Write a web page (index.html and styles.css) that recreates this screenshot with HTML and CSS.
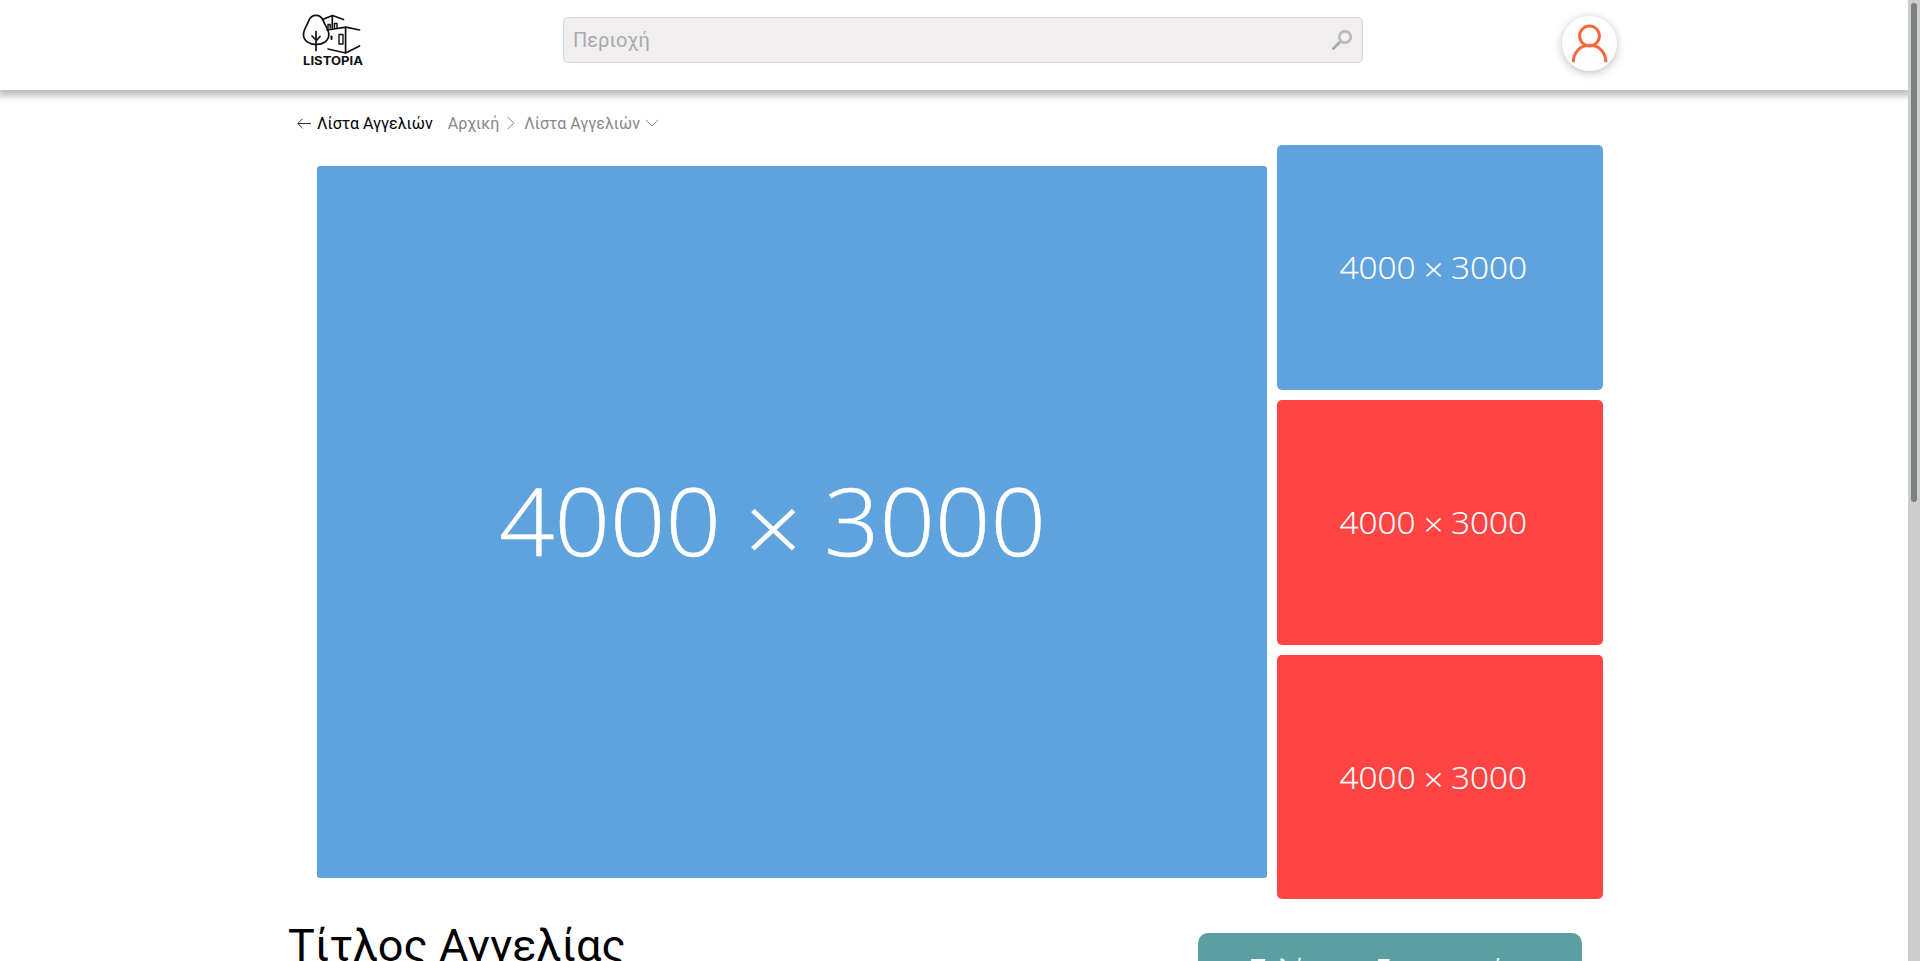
FILE: index.html
```html
<!DOCTYPE html>
<html lang="el">
<head>
<meta charset="utf-8">
<title>Listopia</title>
<link rel="stylesheet" href="styles.css">
</head>
<body>
<div class="page">
  <header class="header">
    <svg class="logo" viewBox="0 0 70 62" fill="none" stroke="#111" stroke-width="1.7" stroke-linecap="round" stroke-linejoin="round">
      <path d="M18 7.4C14.500 7.400 12 9.500 10.800 12.500C9.500 17 5.500 21 5.500 26.500C5.500 33 11.500 36.500 18 36.500C25 36.500 30.800 33 30.800 26.500C30.800 21 26.500 17 25.200 12.500C24 9.500 21.500 7.400 18 7.400Z"/>
      <path d="M18 23.500V42.500M18 32L14 28M18 33L22 28.500"/>
      <path d="M24.500 11.500L34.500 7.500L45.500 11.500M34.300 7.500V20M29 22L48 19.200L61.500 22M47.600 19.200V45M30 41L47.600 45L61.500 38"/>
      <path d="M30 20.500V16.500H32.200V20M36.500 19.500V15.500H39V19.500" stroke-width="1.400"/>
      <path d="M41 26.500H45V36H41Z" stroke-width="1.400"/>
      <path d="M33.500 28.500V31" stroke-width="2"/>
      <text class="logo-text" x="5" y="57" textLength="60" lengthAdjust="spacingAndGlyphs">LISTOPIA</text>
    </svg>
    <label class="search">
      <input class="search-input" type="text" placeholder="Περιοχή">
      <svg class="search-icon" viewBox="0 0 20 20" fill="none" stroke-linecap="round"><path d="M8.500 11.500L1.400 18.600" stroke="#a9a9a9" stroke-width="2.800"/><circle cx="13" cy="7" r="5.700" stroke="#bbb" stroke-width="2.800"/></svg>
    </label>
    <div class="account">
      <svg viewBox="0 0 55 55" width="55" height="55" fill="none" stroke="#f8683f" stroke-width="3"><circle cx="27.500" cy="20" r="9.900"/><path d="M11.300 46.300C11.300 36 18.500 29.300 27.600 29.300S43.900 36 43.900 46.300"/></svg>
    </div>
  </header>
  <nav class="crumbs">
    <svg class="back" viewBox="0 0 14 11" fill="none" stroke="#333"><path d="M5.500 .8L.8 5.500L5.500 10.200M.8 5.500H14"/></svg>
    <span class="current">Λίστα Αγγελιών</span>
    <span class="crumb">Αρχική</span>
    <svg class="next" viewBox="0 0 8 14" fill="none" stroke="#888"><path d="M.8 1L6.800 7L.8 13"/></svg>
    <span class="crumb-last">Λίστα Αγγελιών</span>
    <svg class="down" viewBox="0 0 14 8" fill="none" stroke="#888"><path d="M.8 .8L7 7L13.200 .8"/></svg>
  </nav>
  <section class="gallery">
    <svg class="main-photo blue" viewBox="0 0 950 712"><g class="size"><text x="182" y="390" textLength="222" lengthAdjust="spacingAndGlyphs">4000</text><text x="427.800" y="396.500" textLength="57" lengthAdjust="spacingAndGlyphs">×</text><text x="507" y="390" textLength="222" lengthAdjust="spacingAndGlyphs">3000</text></g></svg>
    <div class="thumbs">
      <svg class="thumb blue" viewBox="0 0 950 712"><g class="size"><text x="182" y="390" textLength="222" lengthAdjust="spacingAndGlyphs">4000</text><text x="427.800" y="396.500" textLength="57" lengthAdjust="spacingAndGlyphs">×</text><text x="507" y="390" textLength="222" lengthAdjust="spacingAndGlyphs">3000</text></g></svg>
      <svg class="thumb red" viewBox="0 0 950 712"><g class="size"><text x="182" y="390" textLength="222" lengthAdjust="spacingAndGlyphs">4000</text><text x="427.800" y="396.500" textLength="57" lengthAdjust="spacingAndGlyphs">×</text><text x="507" y="390" textLength="222" lengthAdjust="spacingAndGlyphs">3000</text></g></svg>
      <svg class="thumb red" viewBox="0 0 950 712"><g class="size"><text x="182" y="390" textLength="222" lengthAdjust="spacingAndGlyphs">4000</text><text x="427.800" y="396.500" textLength="57" lengthAdjust="spacingAndGlyphs">×</text><text x="507" y="390" textLength="222" lengthAdjust="spacingAndGlyphs">3000</text></g></svg>
    </div>
  </section>
  <section class="details">
    <h1 class="title">Τίτλος Αγγελίας</h1>
    <button class="contact">Τηλέφωνο Επικοινωνίας</button>
  </section>
</div>
<div class="scrollbar"><div class="scroll-thumb"></div></div>
</body>
</html>
```
FILE: styles.css
```css
* { box-sizing: border-box; }
body {
  margin: 0;
  height: 100vh;
  overflow: hidden;
  display: flex;
  background: #fff;
  font-family: Roboto, sans-serif;
}
.page { flex: 1; height: 100vh; overflow: hidden; }
.header {
  height: 90px;
  display: flex;
  align-items: flex-start;
  padding-left: 298px;
  box-shadow: 0 4px 6px 2px rgba(0, 0, 0, .25);
  background: #fff;
}
.logo { width: 70px; height: 62px; margin-top: 8px; }
.logo-text { font: 700 11.700px Inter, sans-serif; fill: #111; stroke: none; }
.search {
  width: 800px;
  height: 46px;
  margin: 17px 0 0 195px;
  padding: 0 10px 0 9px;
  display: flex;
  align-items: center;
  border: 1px solid #d8d3d5;
  border-radius: 5px;
  background: #f0eeef;
}
.search-input {
  flex: 1;
  padding: 0;
  border: 0;
  outline: 0;
  background: transparent;
  font: 20px Roboto, sans-serif;
}
.search-input::placeholder { color: #aaa; }
.search-icon { width: 20px; height: 20px; }
.account {
  width: 55px;
  height: 55px;
  margin: 16px 0 0 199px;
  border-radius: 50%;
  background: #fff;
  box-shadow: 0 2px 10px rgba(0, 0, 0, .25);
}
.crumbs {
  height: 55px;
  padding: 13px 0 0 297px;
  display: flex;
  align-items: flex-start;
  font-size: 16px;
  line-height: 42px;
  color: #888;
}
.back { width: 14px; height: 11px; margin: 15px 6px 0 0; }
.current { color: #000; margin-right: 15px; }
.next { width: 8px; height: 14px; margin: 13px 9px 0 8px; }
.down { width: 14px; height: 8px; margin: 16px 0 0 5px; }
.gallery { display: flex; align-items: center; gap: 10px; padding-left: 317px; }
.main-photo { width: 950px; height: 712px; border-radius: 3px; }
.thumbs { display: grid; grid-template-rows: 245px 245px 244px; gap: 10px; }
.thumb { width: 326px; height: 100%; border-radius: 5px; }
.blue { background: #5ea2de; }
.red { background: #ff4444; }
.size { font: 300 93.500px "Open Sans", sans-serif; fill: #fff; stroke: #fff; stroke-width: .5px; }
.details { display: flex; align-items: flex-start; padding: 20px 0 0 288px; }
.title { width: 910px; margin: 0; font-size: 45px; font-weight: 400; line-height: 53px; }
.contact {
  width: 384px;
  height: 72px;
  margin-top: 14px;
  border: 0;
  border-radius: 10px;
  background: #5b9fa2;
  color: #fff;
  font: 25px Roboto, sans-serif;
}
.scrollbar { width: 12px; padding: 3px; background: #cdcdcd; }
.scroll-thumb { width: 6px; height: 499px; border-radius: 3px; background: #7d8180; }
```
